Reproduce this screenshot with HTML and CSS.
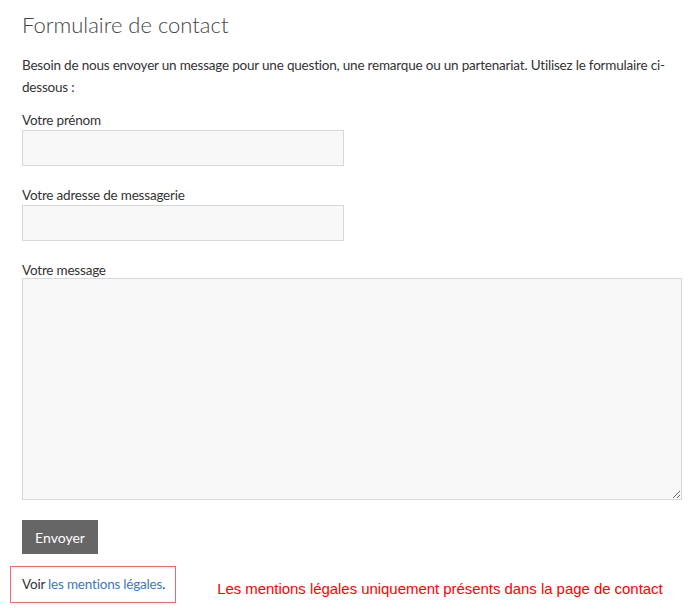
FILE: index.html
```html
<!DOCTYPE html>
<html lang="fr">
<head>
<meta charset="utf-8">
<title>Formulaire de contact</title>
<link rel="stylesheet" href="styles.css">
</head>
<body>
<main class="page">
  <h1 class="title">Formulaire de contact</h1>
  <p class="intro">Besoin de nous envoyer un message pour une question, une remarque ou un partenariat. Utilisez le formulaire ci-dessous :</p>
  <form class="form">
    <label class="field">
      <span class="label">Votre prénom</span>
      <input class="input" type="text">
    </label>
    <label class="field">
      <span class="label">Votre adresse de messagerie</span>
      <input class="input" type="email">
    </label>
    <label class="field">
      <span class="label">Votre message</span>
      <textarea class="textarea"></textarea>
    </label>
    <button class="submit" type="button">Envoyer</button>
  </form>
  <div class="footer">
    <div class="legal">Voir <a class="link" href="#">les mentions légales</a>.</div>
    <div class="note">Les mentions légales uniquement présents dans la page de contact</div>
  </div>
</main>
</body>
</html>
```

FILE: styles.css
```css
html, body {
  margin: 0;
  padding: 0;
  background: #fff;
}
body {
  font-family: "Lato", "Open Sans", sans-serif;
  color: #333;
  font-size: 13.5px;
  letter-spacing: -0.2px;
}
.page {
  padding: 9px 18px 0 22px;
}
.title {
  margin: 0;
  font-size: 22px;
  font-weight: 300;
  color: #444;
  line-height: 32px;
  letter-spacing: 0;
}
.intro {
  margin: 13px 0 0 0;
  line-height: 22px;
}
.form {
  display: flex;
  flex-direction: column;
  margin-top: 12px;
}
.field {
  display: flex;
  flex-direction: column;
  margin-bottom: 18px;
}
.label {
  line-height: 20px;
}
.field + .field .label {
  margin-top: 1px;
}
.input {
  width: 322px;
  height: 36px;
  box-sizing: border-box;
  border: 1px solid #d8d8d8;
  background: #f8f8f8;
  margin: 0;
  padding: 0 8px;
}
.textarea {
  width: 660px;
  height: 222px;
  box-sizing: border-box;
  border: 1px solid #d8d8d8;
  background: #f8f8f8;
  margin: -2px 0 0 0;
  resize: both;
  font-family: inherit;
}
.submit {
  align-self: flex-start;
  margin-top: 2px;
  width: 76px;
  height: 34px;
  border: none;
  background: #666;
  color: #fff;
  font-family: inherit;
  font-size: 14px;
  padding: 0;
}
.footer {
  display: flex;
  align-items: center;
  margin-top: 12px;
  margin-left: -12px;
  white-space: nowrap;
}
.legal {
  border: 1px solid #f06a6a;
  padding: 0 10px 0 11px;
  height: 37px;
  line-height: 35px;
  box-sizing: border-box;
}
.link {
  color: #3b78c2;
  text-decoration: none;
}
.note {
  margin-left: 41px;
  font-family: "Liberation Sans", Arial, sans-serif;
  font-size: 15px;
  letter-spacing: -0.05px;
  color: #f00;
  margin-top: 8px;
}
```
